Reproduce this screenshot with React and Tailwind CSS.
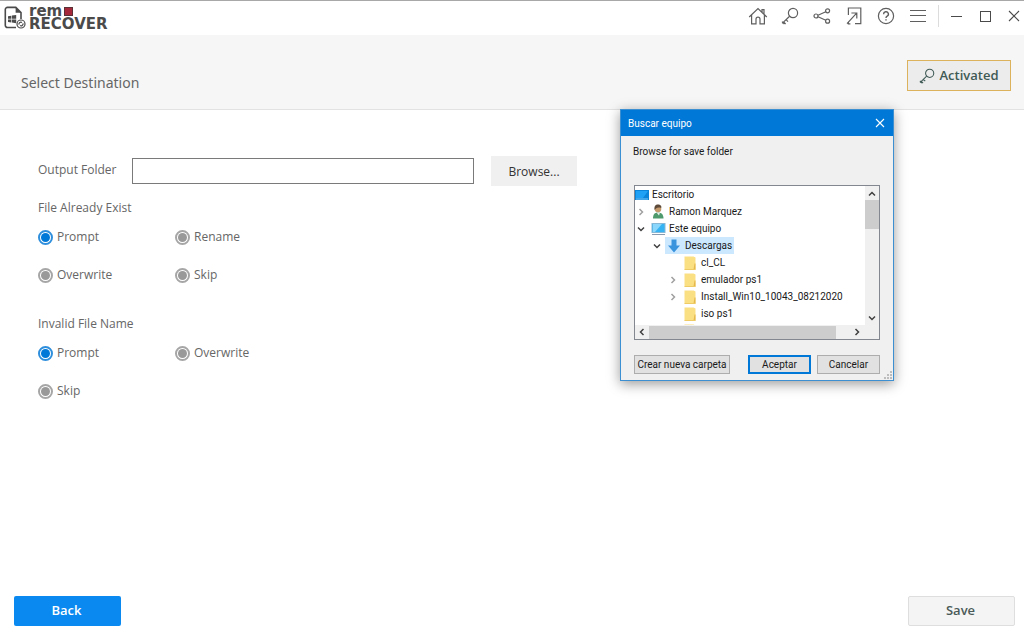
import { useState } from 'react';

const FONT = "font-['Open_Sans','Noto_Sans',sans-serif]";

const KeyIcon = ({ className }) => (
  <svg viewBox="0 0 18 18" fill="none" stroke="currentColor" strokeWidth="1.2" className={className}>
    <circle cx="12" cy="6" r="4.6" />
    <path d="M8.6 9.2 1.2 16.4M2.6 15l2 2M5 12.7l2 2M1 14.6l2.4 2.4" />
  </svg>
);

const HomeIcon = () => (
  <svg viewBox="0 0 20 18" fill="none" stroke="currentColor" strokeWidth="1.2" className="w-5 h-[18px]">
    <path d="M1.2 10 10 1.6 18.8 10M3.6 8v8.8H8v-4.6a2 2 0 0 1 4 0v4.6h4.4V8M14 5.2V2.6h2v4.6" />
  </svg>
);

const ShareIcon = () => (
  <svg viewBox="0 0 18 18" fill="none" stroke="currentColor" strokeWidth="1.2" className="w-[18px] h-[18px]">
    <circle cx="3" cy="9" r="2" />
    <circle cx="14.6" cy="3.8" r="2" />
    <circle cx="14.6" cy="14.2" r="2" />
    <path d="m5 8.2 7.8-3.5M5 9.8l7.8 3.5" />
  </svg>
);

const ExportIcon = () => (
  <svg viewBox="0 0 16 18" fill="none" stroke="currentColor" strokeWidth="1.2" className="w-4 h-[18px]">
    <path d="M2.4 8V1h12.4v15.6H9M1 16.6 10.4 6.4M5.4 6h5.4v5.4M2.4 15v1.8h2" />
  </svg>
);

const HelpIcon = () => (
  <svg viewBox="0 0 18 18" fill="none" stroke="currentColor" strokeWidth="1.2" className="w-[18px] h-[18px]">
    <circle cx="9" cy="9" r="7.6" />
    <path d="M6.6 7.2a2.4 2.4 0 1 1 3.6 2c-.8.5-1.2.8-1.2 1.8M9 12.2v1.4" strokeWidth="1.4" />
  </svg>
);

const MenuIcon = () => (
  <svg viewBox="0 0 16 14" fill="none" stroke="currentColor" strokeWidth="1" className="w-4 h-[14px]">
    <path d="M0 1.5h16M0 6.5h16M0 12.5h16" />
  </svg>
);

const Logo = () => (
  <div className="flex items-center gap-[3px] text-[#4b4b4b]">
    <svg viewBox="0 0 22 24" fill="none" stroke="currentColor" strokeWidth="1.6" className="w-[22px] h-6">
      <path d="M12 21.5H3.5a2.2 2.2 0 0 1-2.2-2.2V3.6a2.2 2.2 0 0 1 2.2-2.2h8.3L17 6.6V13" />
      <path d="M11.6 1.4v5.4H17Z" fill="currentColor" stroke="none" />
      <path d="m4 10.2 3.3-.5v3.1H4Zm3.9-.6 4.3-.6v3.8H7.9ZM4 13.4h3.3v3.1L4 16Zm3.9 0h4.3v3.8l-4.3-.6Z" fill="currentColor" stroke="none" />
      <circle cx="17" cy="18" r="4" fill="#fff" strokeWidth="1.2" />
      <path d="M15 18.6a2 2 0 0 1 3-2.2M19 17.4a2 2 0 0 1-3 2.2" strokeWidth="1.2" />
    </svg>
    <div className="font-['DejaVu_Sans',sans-serif] font-bold text-[15px] leading-[13px]">
      <div className="flex items-center gap-[2px] h-[13px]">
        rem<span className="w-[9px] h-[9px] bg-[#a5283a] border border-[#5b3138]" />
      </div>
      <div>RECOVER</div>
    </div>
  </div>
);

const TitleBar = () => (
  <header className="flex items-center justify-between h-[35px] px-1 bg-white border-t border-[#a8a8a8] text-[#5f5f5f]">
    <Logo />
    <div className="flex items-center pb-1">
      <nav className="flex items-center">
        <button aria-label="Home" className="w-8 flex justify-center"><HomeIcon /></button>
        <button aria-label="License" className="w-8 flex justify-center"><KeyIcon className="w-[18px] h-[18px]" /></button>
        <button aria-label="Share" className="w-8 flex justify-center"><ShareIcon /></button>
        <button aria-label="Export" className="w-8 flex justify-center"><ExportIcon /></button>
        <button aria-label="Help" className="w-8 flex justify-center"><HelpIcon /></button>
        <button aria-label="Menu" className="w-8 flex justify-center"><MenuIcon /></button>
      </nav>
      <div className="flex items-center ml-1 h-[22px] border-l border-[#dcdcdc] pl-3">
        <button aria-label="Minimize" className="w-3 h-3 flex items-center">
          <span className="w-[11px] h-px bg-[#4a4a4a]" />
        </button>
        <button aria-label="Maximize" className="ml-[17px] w-[11px] h-[11px] border border-[#4a4a4a]" />
        <button aria-label="Close" className="ml-[17px]">
          <svg viewBox="0 0 12 12" stroke="#4a4a4a" strokeWidth="1.1" className="w-3 h-3">
            <path d="m1 1 10 10M11 1 1 11" />
          </svg>
        </button>
      </div>
    </div>
  </header>
);

const RadioGroup = ({ legend, name, options }) => {
  const [value, setValue] = useState(options[0]);

  return (
    <fieldset>
      <legend className="text-[12px] leading-4">{legend}</legend>
      <div className="grid grid-cols-[137px_137px] gap-y-[22px] pt-[13px]">
        {options.map((option) => (
          <label key={option} className="flex items-center gap-1 h-4 text-[12px]">
            <input
              type="radio"
              name={name}
              value={option}
              checked={value === option}
              onChange={() => setValue(option)}
              className="appearance-none w-[15px] h-[15px] rounded-full border-2 border-[#a6a6a6] bg-[#999] bg-clip-content p-px
                         checked:border-[#2f8fdc] checked:bg-[#0078d7]"
            />
            {option}
          </label>
        ))}
      </div>
    </fieldset>
  );
};

const DesktopIcon = () => (
  <svg viewBox="0 0 15 12" className="w-[15px] h-3">
    <rect x="0" y="1" width="14" height="10" fill="#0a84d8" />
    <path d="M1 2h12L8 9H1Z" fill="#1fa2f5" />
    <path d="M1 10h12" stroke="#7cc8fa" />
  </svg>
);

const UserIcon = () => (
  <svg viewBox="0 0 12 15" className="w-3 h-[15px]">
    <path d="M1 14.5c0-4 1.5-6 5-6s5.5 2 5.5 6Z" fill="#4f9a6c" />
    <path d="m4.5 8.5 2.5 3 1-3Z" fill="#e9efe9" />
    <circle cx="6" cy="5" r="3.3" fill="#c49a6c" />
    <path d="M2.6 6C2 2 3.5.5 6 .5s4 1.7 3.2 3.5C7 3.2 5 3.5 4 4.5Z" fill="#5d4a38" />
  </svg>
);

const ComputerIcon = () => (
  <svg viewBox="0 0 15 14" className="w-[15px] h-[14px]">
    <rect x="1" y="1.5" width="13" height="9" fill="#35b3f3" stroke="#86b8d6" />
    <path d="M2 2h9L4 10H2Z" fill="#8bd7fb" />
    <path d="M1 12.5h13" stroke="#8a9bb0" />
  </svg>
);

const DownloadIcon = () => (
  <svg viewBox="0 0 14 14" className="w-[14px] h-[14px]">
    <path d="M4.5.5h5v6H13l-6 7-6-7h3.5Z" fill="#3a93dd" />
  </svg>
);

const FolderIcon = () => (
  <svg viewBox="0 0 12 14" className="w-3 h-[14px]">
    <path d="M.5.5h9l2 1v12H.5Z" fill="#fbdf83" />
    <path d="M10.5 7.5h1v6h-2Z" fill="#e6b94c" />
    <path d="M.5 13.5h11" stroke="#efcb66" />
  </svg>
);

const Chevron = ({ dir, className }) => {
  const d = {
    right: 'm2.5 1 3 3-3 3',
    left: 'm5.5 1-3 3 3 3',
    down: 'm1 2.5 3 3 3-3',
    up: 'm1 5.5 3-3 3 3',
  }[dir];
  return (
    <svg viewBox="0 0 8 8" fill="none" stroke="currentColor" strokeWidth="1.5" className={`w-2 h-2 ${className}`}>
      <path d={d} />
    </svg>
  );
};

const TREE = [
  { label: 'Escritorio', icon: DesktopIcon, indent: 'pl-0' },
  { label: 'Ramon Marquez', icon: UserIcon, indent: 'pl-[2px]', arrow: 'right' },
  { label: 'Este equipo', icon: ComputerIcon, indent: 'pl-[2px]', arrow: 'down' },
  { label: 'Descargas', icon: DownloadIcon, indent: 'pl-[18px]', arrow: 'down', selected: true },
  { label: 'cl_CL', icon: FolderIcon, indent: 'pl-[34px]', spacer: true },
  { label: 'emulador ps1', icon: FolderIcon, indent: 'pl-[34px]', arrow: 'right' },
  { label: 'Install_Win10_10043_08212020', icon: FolderIcon, indent: 'pl-[34px]', arrow: 'right' },
  { label: 'iso ps1', icon: FolderIcon, indent: 'pl-[34px]', spacer: true },
  { label: '', icon: FolderIcon, indent: 'pl-[34px]', spacer: true },
];

const TreeRow = ({ item }) => {
  const Icon = item.icon;
  return (
    <li className={`flex items-center h-[17px] ${item.indent}`}>
      {item.arrow && (
        <Chevron dir={item.arrow} className={item.arrow === 'down' ? 'text-[#404040]' : 'text-[#a0a0a0]'} />
      )}
      {item.spacer && <span className="w-2" />}
      <span className={`flex items-center h-[17px] pr-[2px] whitespace-nowrap ${item.selected ? 'bg-[#cce8ff]' : ''} ${item.arrow || item.spacer ? 'ml-1' : ''}`}>
        <span className={`flex ${item.arrow || item.spacer ? 'w-[18px] justify-center' : 'w-[15px]'}`}><Icon /></span>
        <span className="ml-[2px]">{item.label}</span>
      </span>
    </li>
  );
};

const FolderDialog = () => (
  <section
    role="dialog"
    aria-label="Buscar equipo"
    className="absolute top-[109px] right-[130px] w-[274px] bg-[#f0f0f0] border border-[#3c8fd0] shadow-[0_3px_12px_rgba(0,0,0,0.4)]
               font-['Roboto',sans-serif] text-[10px] text-[#1a1a1a]"
  >
    <div className="flex items-center justify-between h-[26px] pl-[7px] pr-2 bg-[#0078d7] text-white">
      <h2>Buscar equipo</h2>
      <button aria-label="Close dialog">
        <svg viewBox="0 0 10 10" stroke="#fff" strokeWidth="1.1" className="w-[10px] h-[10px]">
          <path d="m1 1 8 8M9 1 1 9" />
        </svg>
      </button>
    </div>
    <div className="px-3 pt-2 pb-[6px]">
      <p className="leading-4">Browse for save folder</p>

      <div className="mt-[25px] mx-px border border-[#828790] bg-white">
        <div className="flex h-[139px]">
          <ul className="flex-1 min-w-0 overflow-hidden">
            {TREE.map((item, i) => (
              <TreeRow key={i} item={item} />
            ))}
          </ul>
          <div className="flex flex-col items-center justify-between w-[14px] bg-[#f0f0f0] text-[#404040]">
            <div className="w-full">
              <Chevron dir="up" className="mx-auto mt-1 mb-[2px]" />
              <div className="w-full h-[29px] bg-[#cdcdcd]" />
            </div>
            <Chevron dir="down" className="mb-[3px]" />
          </div>
        </div>
        <div className="flex items-center h-[14px] pl-[3px] pr-[18px] bg-[#f0f0f0] text-[#404040]">
          <Chevron dir="left" className="mr-[3px]" />
          <div className="h-[13px] w-[187px] bg-[#cdcdcd]" />
          <Chevron dir="right" className="ml-auto" />
        </div>
      </div>

      <div className="flex items-center mt-[15px] mx-px">
        <button className="h-[19px] w-24 bg-[#e1e1e1] border border-[#adadad] whitespace-nowrap">Crear nueva carpeta</button>
        <button className="ml-auto h-[19px] w-[63px] bg-[#e1e1e1] border-2 border-[#0078d7] leading-none">Aceptar</button>
        <button className="ml-[6px] h-[19px] w-[63px] bg-[#e1e1e1] border border-[#adadad]">Cancelar</button>
      </div>
    </div>
    <svg viewBox="0 0 8 8" fill="#bdbdbd" className="absolute right-px bottom-px w-2 h-2">
      <path d="M6 0h2v2H6zM3 3h2v2H3zM6 3h2v2H6zM0 6h2v2H0zM3 6h2v2H3zM6 6h2v2H6z" />
    </svg>
  </section>
);

const App = () => (
  <div className={`relative flex flex-col min-h-screen bg-white text-[#666] ${FONT}`}>
    <TitleBar />

    <div className="flex items-start justify-between h-[75px] pl-[21px] pr-[13px] bg-[#f6f6f6] border-b border-[#e2e2e2]">
      <h1 className="mt-9 font-['Noto_Sans',sans-serif] text-[14px] leading-6">Select Destination</h1>
      <button className="flex items-center justify-center gap-1 mt-[25px] w-[104px] h-[31px] bg-[#ececec] border border-[#dcb25c] text-[13px] font-semibold text-[#3f5a55]">
        <KeyIcon className="w-4 h-4" /> Activated
      </button>
    </div>

    <main className="flex-1 pl-[38px] pt-[46px]">
      <div className="flex items-center">
        <label htmlFor="output" className="w-[94px] pb-[2px] text-[12px]">Output Folder</label>
        <input id="output" type="text" className="w-[342px] h-[26px] px-2 text-[12px] border border-[#7a7a7a] bg-white" />
        <button className="ml-[17px] w-[86px] h-[30px] pt-px bg-[#f0f0f0] text-[12px] text-[#333]">Browse...</button>
      </div>
      <div className="flex flex-col gap-[33px] mt-[14px]">
        <RadioGroup legend="File Already Exist" name="exists" options={['Prompt', 'Rename', 'Overwrite', 'Skip']} />
        <RadioGroup legend="Invalid File Name" name="invalid" options={['Prompt', 'Overwrite', 'Skip']} />
      </div>
    </main>

    <footer className="flex justify-between pl-[14px] pr-[9px] pb-[10px] text-[13px] font-semibold">
      <button className="w-[107px] h-[30px] pr-[2px] rounded-[2px] bg-[#0a8af0] text-white">Back</button>
      <button className="w-[107px] h-[30px] pr-[2px] rounded-[2px] bg-[#f4f4f4] border border-[#dedede] text-[#4a5a58]">Save</button>
    </footer>

    <FolderDialog />
  </div>
);

export default App;
